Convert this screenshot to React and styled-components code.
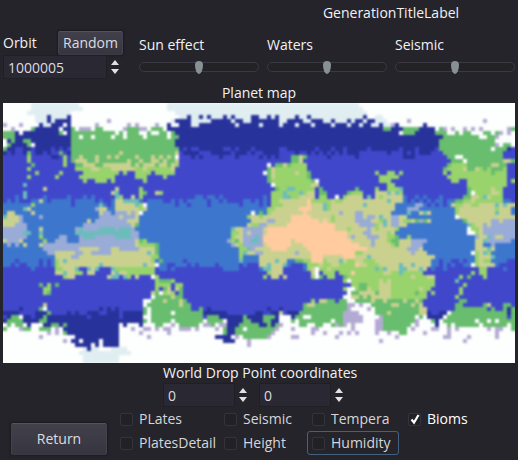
import React, { useState } from 'react';
import styled, { createGlobalStyle } from 'styled-components';

const BIOMES = {
    w: "#fdfefe",
    i: "#e0eef2",
    n: "#28329b",
    b: "#4047cb",
    m: "#3d76cd",
    g: "#68bd6e",
    l: "#99d36c",
    k: "#cad18f",
    o: "#ffcb9f",
    v: "#99abd7",
    t: "#6bbcbb",
    p: "#b3aad3"
};

const MAP_WIDTH = 128;

// One string per map row, every entry is a biome letter and the column it starts at
const MAP_ROWS = [
    "w0 i7 w19 i41 w89",
    "w0 i7 w20 i41 w90",
    "w0 i6 w17 i43 w91",
    "w0 i8 n11 i12 n16 w17 i44 n46 i47 n49 i50 n51 i52 n55 i56 n57 i58 n62 i64 n66 i67 n68 i69 n73 i74 n76 i77 n90 w91 i93 w95",
    "w0 i8 n11 i12 n13 w17 p26 w27 i42 n43 i47 n52 i57 n58 i60 n62 i69 n71 i75 n77 i80 n82 i83 n86 i87 n88 i90 n91 i93 w96 p101 w102 p120 w121",
    "p0 w1 p4 w5 n9 i10 n12 w15 n16 w17 p23 w24 p31 w32 p33 w34 p38 w39 n41 w42 n44 i47 n49 i58 n59 i64 n65 i69 n70 i73 n74 i77 n78 i82 n83 i86 n87 i89 n90 i92 n94 i95 p97 n98 w99 n105 w106",
    "w0 p2 w3 g7 n8 w14 n15 g17 w18 p19 w22 g23 w25 p30 g31 p34 w36 g37 w40 n41 g95 n97 g100 n104 w108 g109 p110 w111 p112 w113 p115 w116 p117 w118 p119 w120 p126 g127",
    "g0 n3 w4 n5 g14 w15 n16 g17 w28 g29 w30 g31 w34 g36 w37 g39 w41 g42 n43 w99 g100 n103 g108 w111 g113 w114 g115 w117 g120 w122 g123 p124 w125 p126 w127",
    "g0 n3 g17 w19 g20 w22 g23 w27 g28 w30 g31 w35 g36 w41 g42 n44 g110 w119 g121 p123 w124",
    "w0 n1 g2 n3 g5 n7 g17 n43 g109 w123",
    "w0 g1 n2 g6 w7 n8 g17 n43 g109 p123 w124 g125 w127",
    "g0 n1 b3 n5 b7 n8 b12 n13 b14 n15 b16 g17 n44 b45 n46 b47 n49 b55 n57 b58 n59 b62 n63 b69 n71 b78 n79 b82 n83 b85 n86 b91 n92 b99 n100 b103 n104 b108 g109 w122 g123 n126 b127",
    "n0 b1 n2 b3 n5 g6 b7 n8 b10 n11 b12 g14 b15 n16 g17 k29 g30 k43 b44 n45 b49 n52 b57 n58 b61 n62 b63 n65 b69 n73 b74 n76 b77 n78 b79 n80 b81 n82 b83 n84 b85 n86 b89 n96 b97 n100 b101 n102 b103 n104 b107 g110 b125",
    "b0 l6 b7 n12 b14 l15 b16 g17 k19 g20 k23 g24 k26 g27 k28 g29 k33 g34 k37 g38 k39 g40 k41 g42 w43 b44 n47 b48 n49 b50 n54 b55 n58 b59 n64 b65 n66 b67 n68 b69 g72 k74 g75 b76 n81 b82 n88 b89 n100 b103 g111 w113 g115 b125",
    "b0 l6 b7 l15 b16 g17 k18 g21 k23 g24 k31 g32 k34 g35 k37 g39 k40 g41 k43 b44 g72 k74 b75 g112 w115 g116 k125 g127",
    "b0 g7 b8 l15 b16 g18 k20 g23 k25 g32 k33 g34 k35 g38 k39 g41 k42 l43 b44 w66 b67 g68 k70 g71 l72 b76 g111 l112 g116 k122 g124 b126",
    "b0 l6 b7 l18 k22 l24 k27 l33 k35 l36 k42 b43 g66 k67 l68 b76 g110 l111 k115 g116 k118 l119 g120 l121 g122 l125 b126",
    "b0 l8 b9 l14 b15 l20 b29 l30 b31 l33 b37 l38 b43 w65 g66 k67 l68 k73 l74 g76 b77 l93 b94 l96 b98 l99 b100 l110 b111 l112 g122 l123 b126",
    "b0 l6 b7 l13 b14 l19 b28 l33 b36 l40 b41 g66 k67 l68 g76 b77 l94 b99 l111 b126",
    "b0 l20 b21 l23 b26 l27 b28 l35 b36 g66 l67 g77 w78 b79 l94 b97 l112 b114 l116 b126 l127",
    "b0 t5 b6 w67 l68 k77 b79 l96 b98 l116 b126",
    "b0 k10 b11 k28 b29 l34 b35 g68 l69 t71 l73 b78 g79 b80 g88 b89 l93 b94 l96 t99 b100 g116 l117 k122 l123 b125",
    "b0 t5 b6 k27 t28 b29 l34 g35 b36 k38 l39 b40 l67 t70 l71 t74 l75 k76 b78 g79 b81 g86 l87 b90 k93 t96 k97 t98 l99 b100 g116 w117 l118 k122 l124 b125",
    "b0 m3 b4 t5 b6 m10 b11 m16 b17 m20 b21 m22 b23 t28 l29 b30 k32 b33 l34 b35 m48 b50 m51 b53 m54 b55 m65 b66 l67 t70 l72 k74 b78 l79 b81 w83 b84 l85 k86 b90 t91 b92 k93 l94 k95 m100 b101 m103 b104 m105 b106 m109 b110 g115 k117 l119 t120 k121 l122 b125",
    "b0 m1 b2 m3 b4 m7 k9 m10 b11 m12 b17 m18 b23 m24 b25 m27 k28 t30 m34 b35 m36 b40 m42 b43 m44 b45 m46 b51 m52 b54 m55 b56 m60 b62 m63 b64 m65 b66 l67 k69 o76 l77 k82 l83 k85 t96 k97 m100 b101 m102 b103 m104 b105 m106 b107 m108 b110 m111 g113 l115 k117 l118 m125 b127",
    "m0 l7 m8 b17 m18 t24 m25 b26 m27 k28 t33 l34 w35 m36 b43 m44 b46 m47 b51 m52 b59 m60 b64 m65 b66 l67 k70 o76 k77 t80 l81 k82 t90 k91 m98 v103 m105 b106 m107 b108 m109 b110 m111 k112 l113 k115 l117 k119 t123 k124 t125 k126",
    "m0 t5 k6 m7 v23 k24 m26 k28 l34 k35 m36 l66 k68 o74 k77 t80 l81 k82 m98 v101 m104 l113 k114 l123 k124 m127",
    "m0 k1 m3 k7 m8 k24 v25 m27 v28 k31 v32 k33 w34 m35 w62 m63 g64 m65 l66 k67 o75 k76 v84 k85 v88 k90 m97 t101 m102 k104 t105 k106 m107 l113 k114 t123 k124 m127",
    "t0 k1 v4 m5 v9 m10 v24 k29 v30 k33 m34 l61 k62 l64 k65 o72 k77 l82 k83 v88 k90 v91 k93 t94 k95 v97 k99 m101 w113 k114",
    "k0 v4 m5 k21 m22 v23 k31 m34 k62 v66 k68 o72 k79 o80 k81 l82 k83 v88 k92 l94 t95 k96 v97 k99 l100 k102 g103 v104 g105 k106 m107 g115 k116 v122 k124 v125",
    "k0 v3 m6 v20 k32 g33 m34 k61 l62 v64 k66 o71 k83 v89 l93 k94 t95 k96 v97 k99 m101 t116 l117 k118 v120 k121 v122",
    "v0 m6 k9 m10 v18 t19 v20 t24 v28 t29 v32 m33 t57 k58 v60 k65 o66 k83 l86 k87 v91 k92 l93 k94 l98 m99 w116 l117 k119 v120",
    "v0 t5 m7 t9 m10 t18 v32 m34 l57 k59 v60 k61 v62 k65 o66 k86 v90 k92 l96 k97 m98 w116 l118 k119 v120",
    "v0 m6 l9 m10 v14 m16 v19 t20 v23 t28 v32 m34 l57 k58 v60 t63 v64 o65 k86 v87 k88 v91 k94 l96 g98 m99 l101 m102 v118 k119 t121 v122 k123 v125",
    "k0 v1 k4 m5 l10 m11 v13 m16 v19 k33 g34 l35 m36 v56 l57 g58 k59 v60 t62 v64 o65 k72 o73 k87 v92 k93 l96 g97 k99 v102 m106 k118 t120 v121 m127",
    "m0 v1 m2 v3 m4 k5 m6 k9 v10 k33 l34 g38 m39 v57 k58 l59 v60 k65 o66 k72 o75 k89 v92 k93 l97 g98 k99 v102 m105 k118 m120 v122 m123",
    "m0 v10 k19 v24 k27 v29 k34 g38 m39 l59 t61 v62 k63 o67 k71 o76 k91 v101 k104 m105 k118 t121 k122 m123",
    "m0 v11 k13 v18 k20 v22 k27 t36 k37 g38 m39 l59 t60 k61 v63 k65 v73 k74 o77 l88 k90 v102 k103 m106 w117 l118 k119 t120 l121 m122",
    "m0 k13 v17 k19 l37 m39 l59 m60 k64 o77 k80 o85 k88 t91 k92 m108 l118 k119 t122 m123",
    "m0 b3 m4 b9 m10 b11 m12 l13 k14 t15 k16 l37 m38 g39 m40 b45 m46 t59 m60 k64 t68 k69 m71 g73 l75 o77 l80 k81 t84 k85 l86 k88 l90 k93 m107 b109 m110 b112 m114 b115 m116 l118 k119 l120 m122 b126",
    "m0 b2 m3 b4 m6 b9 m10 b11 m12 l13 k14 t24 k25 t35 k36 w38 m39 b41 m43 b46 m47 b48 m49 b53 m54 b59 m60 b61 k64 t66 k67 t70 m71 b72 m75 l76 k79 l80 k82 l84 o88 k89 l91 k94 t99 k100 t102 k103 m107 b109 m110 b111 m112 b113 m115 w117 l118 k119 m123 b124",
    "b0 m7 b8 l13 k15 t18 b19 t21 k22 t23 b24 t27 l28 b38 m39 b41 m42 b43 m55 b59 m64 t65 k67 b70 m75 l76 k77 w78 l79 k81 l82 t93 l94 t95 k96 t99 k101 t104 k105 b106 m107 b108 m110 b111 l119 b121 m125 b126",
    "b0 k13 t15 k16 l18 b20 k21 b23 k27 t28 k29 l31 b38 l66 k67 b70 k77 w78 b79 l80 b83 l84 o87 l88 k95 l97 t99 l100 b105 l117 b118 l119 b121",
    "b0 l15 k16 b18 k26 t27 b29 t30 l31 b32 k33 b34 w37 l38 b39 l65 b66 k67 b69 k70 b71 l77 w78 g79 b80 l81 b83 g85 l86 k102 l103 k106 b108 l114 b115 g116 b117 l120 b121",
    "b0 l38 g39 l42 b43 b84 l85 w86 l87 k94 l95 k96 l97 b108 t113 b114",
    "b0 g9 b10 l11 b12 g13 b14 l38 b42 l43 b45 b85 l87 g89 l91 k94 l97 b108 l115 b116",
    "b0 l10 b12 l38 b39 g40 k41 b42 k43 g44 b45 l85 w86 l88 g89 k91 l92 k94 l97 k104 l105 b107 l114 b115",
    "b0 l10 g11 b12 k37 g38 w39 l40 k41 l42 b43 g44 b45 w86 g87 k89 g93 k94 l97 g103 l104 b106 l107 b108 l114 b115",
    "b0 w37 g38 k42 g43 b45 w85 k87 g89 k90 g91 k92 l97 b106 l113 b114",
    "b0 w35 g37 k40 g41 k44 g45 b46 l77 b78 k79 g81 b83 g84 w86 g88 k92 g93 k95 g96 k100 g101 k103 g104 b105 g114 b116",
    "b0 k10 b11 w35 g36 k44 g45 b47 g75 k76 g78 p86 w88 p89 w90 g92 k97 g99 k102 g103 k104 b105 g113 b115 g120 k121 b122 g125 b127",
    "b0 n4 b5 g9 w10 b11 n24 b25 n26 b27 n28 b29 g35 w36 g37 b47 g49 b50 n51 b52 n66 b67 n69 b70 g75 p86 w87 p91 w92 g93 k104 b106 g113 b121 g122 b123 g125 n126 g127",
    "n0 b4 n8 g11 b12 n16 b17 n18 b19 n21 b24 n26 b29 n30 g35 w36 g37 w42 g43 n50 b56 n63 b65 n67 k69 b70 n71 g74 p85 w89 g93 k96 g97 k104 n106 b107 n109 w111 g112 n126 g127",
    "b0 n1 g2 w4 n5 b7 n8 g10 n11 b21 n22 b29 n30 w35 g37 b50 g51 n54 g60 n61 g65 n68 w69 n72 g73 w75 g77 p85 w90 p94 g95 w103 g104 w105 n106 w110 g111 b126 g127",
    "n0 g1 n5 g9 n11 g35 w36 g37 w42 g43 w50 g51 w55 n56 g60 n62 g65 n67 w69 g72 w73 g74 w82 g83 p85 w90 p93 g95 p103 w104 g107 n108 w109 g110 w118 g119 w121 g122 w123 g124",
    "w0 g1 w2 g3 w5 n6 w7 n10 g12 n14 g15 n16 w29 n30 w31 n34 w35 g38 w40 p42 w43 g44 w49 p50 g52 w53 p54 n56 g59 n64 g66 n67 g68 p69 w70 g74 w76 g78 w80 g82 p83 g84 p85 w86 p87 w88 p93 g95 w102 p103 w104 n108 w109 g111 w112 g113 w119 g120 w126 g127",
    "g0 w1 p4 g5 w7 g9 w12 p13 w14 n15 w29 p32 w33 p35 w37 p38 w39 p40 w42 p44 w47 p48 w49 p53 w54 g55 n56 g58 w60 g61 p68 w69 p72 w73 p77 w79 p87 w88 p93 g95 w101 p102 w103 p107 w109 p111 w112 p113 w114 p121 w122 p123 w125 g127",
    "w0 p11 w12 p13 w14 g15 n16 w29 p34 w35 p41 w42 g55 n56 g58 p67 w68 p77 w78 p80 w81 p84 w85 p86 w87 p88 w89 p93 w94 p96 w97 g99 w101 p105 w106 p111 w112 p123 w124",
    "w0 p9 w10 n18 w29 p36 w37 n53 w57 p58 w59 g60 p66 w67 p72 w74 p83 w84 p98 w99 p110 w112 p116 w117 p123 w124",
    "w0 p15 w16 n17 w19 n20 w24 n25 w29 n55 w58 p61 w62 p94 w95 p115 w116",
    "w0 n18 w22 n23 w24 n25 w29 p61 w62",
    "w0 i20 n21 i22 w24 i27 w31",
    "w0 i19 w32",
    "w0 i20 w29",
    "w0 i20 w29"
];

const parseRow = (row) => {
    const cells = row.split(" ").map((entry) => ({ biome: entry[0], start: Number(entry.slice(1)) }));
    return cells.map((cell, i) => ({
        ...cell,
        // first and last runs reach past the edge so that the smoothing stays opaque there
        x: cell.start === 0 ? -2 : cell.start,
        end: i === cells.length - 1 ? MAP_WIDTH + 2 : cells[i + 1].start
    }));
};

const PlanetMap = () => (
    <MapImage viewBox={`0 0 ${MAP_WIDTH} ${MAP_ROWS.length}`} preserveAspectRatio="none" role="img" aria-label="Planet map">
        <filter id="smooth" x="-2" y="-2" width="132" height="69" filterUnits="userSpaceOnUse" colorInterpolationFilters="sRGB">
            <feGaussianBlur stdDeviation="0.29" />
        </filter>
        <rect width="128" height="65" fill={BIOMES.w} />
        <g filter="url(#smooth)" shapeRendering="crispEdges">
            {MAP_ROWS.map((row, y) => parseRow(row).map((run) => (
                <rect key={`${y}-${run.start}`} x={run.x} y={y} width={run.end - run.x} height="1" fill={BIOMES[run.biome]} />
            )))}
        </g>
    </MapImage>
);

const SpinBox = ({ label, initial }) => {
    const [value, setValue] = useState(initial);
    const step = (amount) => setValue(Number(value) + amount);

    return (
        <Spin>
            <SpinInput type="text" inputMode="numeric" aria-label={label} value={value} onChange={(e) => setValue(e.target.value)} />
            <Arrows>
                <button type="button" aria-label={`Increase ${label}`} onClick={() => step(1)}>
                    <svg width="8" height="5" viewBox="0 0 8 5"><path d="M4 0 L8 5 H0 Z" fill="#e2e2e4" /></svg>
                </button>
                <button type="button" aria-label={`Decrease ${label}`} onClick={() => step(-1)}>
                    <svg width="8" height="5" viewBox="0 0 8 5"><path d="M0 0 H8 L4 5 Z" fill="#e2e2e4" /></svg>
                </button>
            </Arrows>
        </Spin>
    );
};

const Slider = ({ label }) => (
    <SliderField>
        {label}
        <Range type="range" min="0" max="100" defaultValue="50" />
    </SliderField>
);

const LAYERS = ["PLates", "Seismic", "Tempera", "Bioms", "PlatesDetail", "Height", "Humidity"];

const App = () => {
    const [layer, setLayer] = useState("Bioms");

    return (
        <Page>
            <GlobalStyle />
            <Controls>
                <Title>GenerationTitleLabel</Title>
                <Orbit>
                    <OrbitHeader>
                        <span>Orbit</span>
                        <Button type="button">Random</Button>
                    </OrbitHeader>
                    <SpinBox label="Orbit" initial={1000005} />
                </Orbit>
                <Slider label="Sun effect" />
                <Slider label="Waters" />
                <Slider label="Seismic" />
            </Controls>
            <Caption>Planet map</Caption>
            <PlanetMap />
            <DropPoint>
                <Caption>World Drop Point coordinates</Caption>
                <Coordinates>
                    <SpinBox label="X coordinate" initial={0} />
                    <SpinBox label="Y coordinate" initial={0} />
                </Coordinates>
            </DropPoint>
            <Footer>
                <Button type="button" $large>Return</Button>
                <Layers>
                    {LAYERS.map((name) => (
                        <CheckLabel key={name} $focused={name === "Humidity"} $active={name === layer}>
                            <CheckInput type="checkbox" checked={name === layer} onChange={() => setLayer(name)} />
                            <CheckBox>
                                {name === layer && (
                                    <svg width="12" height="12" viewBox="0 0 12 12">
                                        <path d="M2.5 5.5 L5 8.5 L9.5 1" fill="none" stroke="#fff" strokeWidth="2.2" />
                                    </svg>
                                )}
                            </CheckBox>
                            {name}
                        </CheckLabel>
                    ))}
                </Layers>
            </Footer>
        </Page>
    );
};

export default App;

const GlobalStyle = createGlobalStyle`
    * {
        box-sizing: border-box;
    }

    body {
        margin: 0;
        background: #25242a;
        color: #f2f2f4;
        font-family: "Open Sans", "Noto Sans", sans-serif;
        font-size: 14px;
        line-height: 20px;
    }

    button, input {
        font: inherit;
    }
`;

const Page = styled.main`
    padding: 3px;
`;

const Controls = styled.section`
    display: grid;
    grid-template-columns: 128px repeat(3, 1fr);
    column-gap: 8px;
    row-gap: 8px;
    margin-bottom: 4px;
`;

const Title = styled.div`
    grid-column: 3 / -1;
    text-align: center;
`;

const Orbit = styled.div`
    padding-right: 8px;
`;

const OrbitHeader = styled.div`
    display: flex;
    align-items: center;
    justify-content: space-between;
`;

const Button = styled.button`
    height: ${props => props.$large ? "32px" : "24px"};
    width: ${props => props.$large ? "96px" : "auto"};
    padding: 0 4px;
    border: 1px solid #4b4954;
    border-color: #54525e #44424c #3c3a44;
    border-radius: 2px;
    background: linear-gradient(#42404a, #37353f);
    box-shadow: 0 0 2px 1px #1c1b20;
    color: #dcdce0;
    line-height: 20px;
`;

const Spin = styled.div`
    display: flex;
    align-items: center;
    gap: 4px;
`;

const SpinInput = styled.input`
    flex: 1;
    min-width: 0;
    height: 24px;
    padding: 0 4px;
    border: 1px solid #201f25;
    background: #2a2832;
    color: #dcdce0;
    outline: none;
`;

const Arrows = styled.div`
    display: flex;
    flex-direction: column;
    gap: 4px;
    width: 12px;

    button {
        display: block;
        height: 5px;
        padding: 0;
        border: 0;
        background: none;
        text-align: left;
    }

    svg {
        display: block;
    }
`;

const SliderField = styled.label`
    display: flex;
    flex-direction: column;
    gap: 4px;
    padding-top: 4px;
`;

const Range = styled.input`
    appearance: none;
    width: 100%;
    height: 16px;
    margin: 0;
    background: none;

    &::-webkit-slider-runnable-track {
        height: 10px;
        border: 1px solid #3b3943;
        border-radius: 5px;
        background: #232227;
    }

    &::-webkit-slider-thumb {
        appearance: none;
        width: 8px;
        height: 13px;
        margin-top: -2px;
        border-radius: 4px 4px 4px 4px / 4px 4px 9px 9px;
        background: #879092;
    }
`;

const Caption = styled.div`
    text-align: center;
`;

const MapImage = styled.svg`
    display: block;
    width: 100%;
    aspect-ratio: 128 / 65;
`;

const DropPoint = styled.section`
    width: 192px;
    margin: 0 auto;
    white-space: nowrap;
`;

const Coordinates = styled.div`
    display: grid;
    grid-template-columns: repeat(2, 88px);
    gap: 8px;
`;

const Footer = styled.footer`
    display: flex;
    align-items: flex-end;
    gap: 8px;
    padding-left: 8px;
`;

const Layers = styled.div`
    display: grid;
    grid-template-columns: 100px 84px 92px auto;
    column-gap: 4px;
    white-space: nowrap;
`;

const CheckLabel = styled.label`
    display: flex;
    align-items: center;
    gap: 6px;
    height: 24px;
    padding: 0 4px;
    border: 1px solid ${props => props.$focused ? "#43617f" : "transparent"};
    border-radius: 3px;
    color: ${props => props.$active ? "#fff" : "#d6d6da"};
`;

const CheckInput = styled.input`
    position: absolute;
    opacity: 0;
    pointer-events: none;
`;

const CheckBox = styled.span`
    display: block;
    flex: none;
    width: 13px;
    height: 13px;
    border: 1px solid #35333c;
    border-radius: 2px;
    background: #222126;

    svg {
        display: block;
    }
`;
